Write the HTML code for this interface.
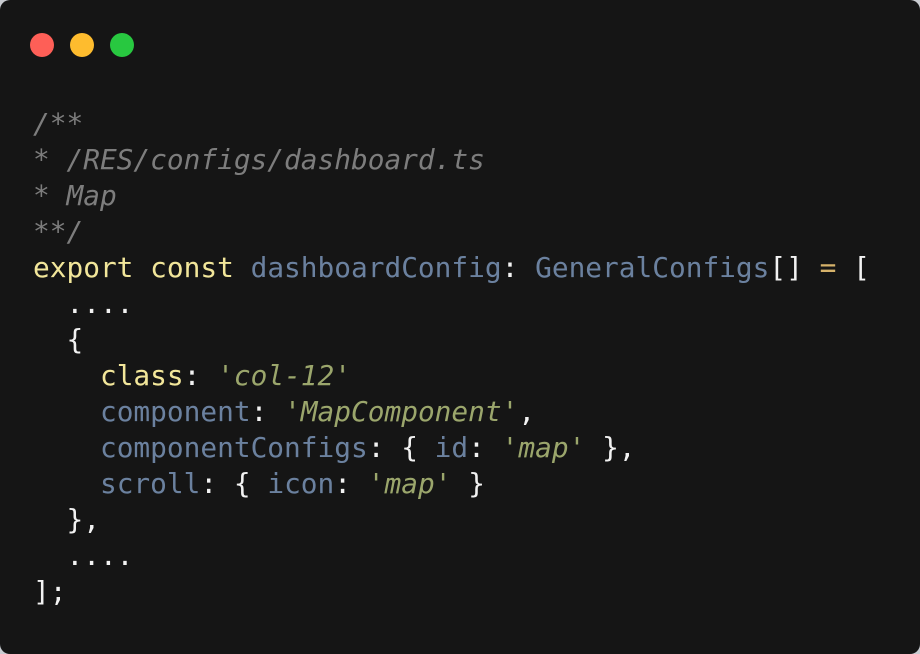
<!DOCTYPE html>
<html><head><meta charset="utf-8"><style>
html,body{margin:0;padding:0;width:920px;height:654px;background:#c9ccd1;overflow:hidden}
.card{position:absolute;left:0;top:0;width:920px;height:654px;background:#151515;border-radius:10px}
.dot{position:absolute;top:33px;width:24px;height:24px;border-radius:50%}
pre{position:absolute;left:33px;top:106px;margin:0;font-family:"DejaVu Sans Mono","Liberation Mono",monospace;font-size:27.8px;line-height:36px;color:#f2f2f2}
.c{color:#7d7d7d;font-style:italic}
.k{color:#f2e69a}
.v{color:#6b819f}
.s{color:#9ba66c;font-style:italic}
.o{color:#d6b26a}
</style></head><body>
<div class="card">
<div class="dot" style="left:30px;background:#fe5f57"></div>
<div class="dot" style="left:70px;background:#febc2e"></div>
<div class="dot" style="left:110px;background:#28c840"></div>
<pre><span class="c">/**
* /RES/configs/dashboard.ts
* Map
**/</span>
<span class="k">export const</span> <span class="v">dashboardConfig</span>: <span class="v">GeneralConfigs</span>[] <span class="o">=</span> [
  ....
  {
    <span class="k">class</span>: <span class="s">'col-12'</span>
    <span class="v">component</span>: <span class="s">'MapComponent'</span>,
    <span class="v">componentConfigs</span>: { <span class="v">id</span>: <span class="s">'map'</span> },
    <span class="v">scroll</span>: { <span class="v">icon</span>: <span class="s">'map'</span> }
  },
  ....
];</pre>
</div>
</body></html>
